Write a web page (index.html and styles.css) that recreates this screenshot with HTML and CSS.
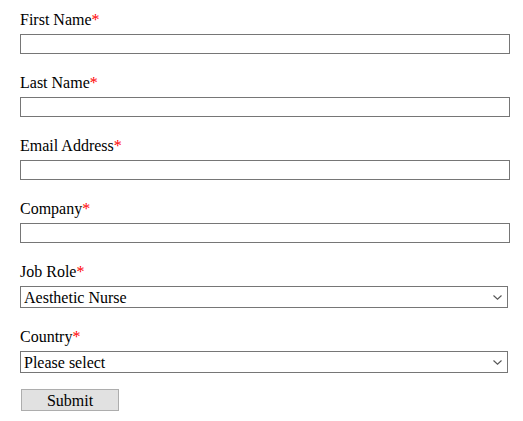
FILE: index.html
```html
<!DOCTYPE html>
<html>
<head>
<meta charset="utf-8">
<link rel="stylesheet" href="styles.css">
</head>
<body>
<form class="form">
  <div class="field">
    <label class="label">First Name<span class="req">*</span></label>
    <input class="input" type="text">
  </div>
  <div class="field">
    <label class="label">Last Name<span class="req">*</span></label>
    <input class="input" type="text">
  </div>
  <div class="field">
    <label class="label">Email Address<span class="req">*</span></label>
    <input class="input" type="email">
  </div>
  <div class="field">
    <label class="label">Company<span class="req">*</span></label>
    <input class="input" type="text">
  </div>
  <div class="field">
    <label class="label">Job Role<span class="req">*</span></label>
    <div class="select-wrap">
      <select class="select">
        <option>Aesthetic Nurse</option>
      </select>
      <svg class="chevron" width="9" height="5" viewBox="0 0 9 5"><path d="M0.5 0.5 L4.5 4.2 L8.5 0.5" fill="none" stroke="#555" stroke-width="1.1"/></svg>
    </div>
  </div>
  <div class="field">
    <label class="label">Country<span class="req">*</span></label>
    <div class="select-wrap">
      <select class="select">
        <option>Please select</option>
      </select>
      <svg class="chevron" width="9" height="5" viewBox="0 0 9 5"><path d="M0.5 0.5 L4.5 4.2 L8.5 0.5" fill="none" stroke="#555" stroke-width="1.1"/></svg>
    </div>
  </div>
  <button class="submit" type="button">Submit</button>
</form>
</body>
</html>
```
FILE: styles.css
```css
html, body {
  margin: 0;
  padding: 0;
  background: #ffffff;
}
body {
  font-family: "Liberation Serif", "Times New Roman", serif;
  font-size: 16px;
  color: #000000;
}
.form {
  padding: 11px 0 0 20px;
  display: flex;
  flex-direction: column;
  align-items: flex-start;
}
.field {
  display: flex;
  flex-direction: column;
  align-items: flex-start;
  margin-bottom: 20px;
}
.label {
  line-height: 18px;
  margin-bottom: 5px;
}
.req {
  color: #ff0000;
}
.input {
  box-sizing: border-box;
  width: 490px;
  height: 20px;
  margin: 0;
  padding: 1px 2px;
  border: 1px solid #767676;
  border-radius: 0;
  font-family: "Liberation Serif", serif;
  font-size: 16px;
  background: #ffffff;
  outline: none;
}
.select-wrap {
  position: relative;
  width: 488px;
  height: 22px;
}
.select {
  -webkit-appearance: none;
  appearance: none;
  box-sizing: border-box;
  display: block;
  width: 488px;
  height: 22px;
  margin: 0;
  padding: 1px 20px 0 3px;
  border: 1px solid #767676;
  border-radius: 0;
  font-family: "Liberation Serif", serif;
  font-size: 16px;
  line-height: 20px;
  background: #ffffff;
  color: #000000;
}
.chevron {
  position: absolute;
  right: 6px;
  top: 9px;
  pointer-events: none;
}
.submit {
  box-sizing: border-box;
  margin: -4px 0 0 1px;
  width: 98px;
  height: 22px;
  font-family: "Liberation Serif", serif;
  font-size: 16px;
  background: #e1e1e1;
  border: 1px solid #adadad;
  border-radius: 0;
  color: #000000;
  padding: 2px 0 0 0;
}
```
